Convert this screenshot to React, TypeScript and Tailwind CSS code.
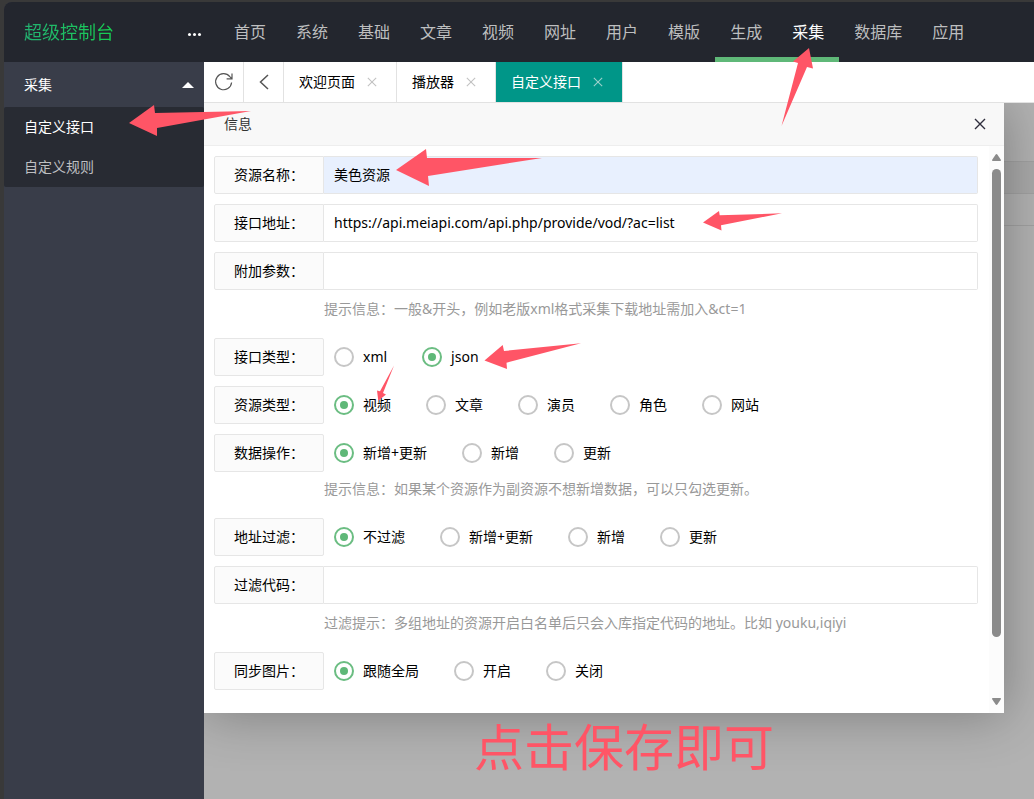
import { useState } from "react";
import type { ReactNode } from "react";

const NAV = ["首页", "系统", "基础", "文章", "视频", "网址", "用户", "模版", "生成", "采集", "数据库", "应用"];
const UNDERLINED = ["生成", "采集"];
const TABS = ["欢迎页面", "播放器", "自定义接口"];
const MENU = ["自定义接口", "自定义规则"];

// tip, barb, neck, tail, neck, barb
const ARROWS = [
  "129,123 154,105 155,113 251,111 157,128 157,136",
  "396,170 426,149 427,158 542,158 428,176 429,186",
  "809,48 813,68.5 807,67 781.5,126 798,63 793,61.5",
  "703,222.5 719,211 719.7,215.3 782,213.3 721,225.3 721.5,230.5",
  "484.5,360.5 502.7,345 504,351 581,343.3 506.5,362.7 507,369",
  "378.3,400.7 377,390.5 380,391.3 394,365.5 383,393 386,394.5",
];

function Cross({ className }: { className: string }) {
  return (
    <svg viewBox="0 0 12 12" className={className} fill="none" stroke="currentColor" aria-hidden="true">
      <path d="M1 1 L11 11 M11 1 L1 11" />
    </svg>
  );
}

function TextRow({ id, label, value = "", filled }: { id: string; label: string; value?: string; filled?: boolean }) {
  const [text, setText] = useState(value);
  return (
    <div className="flex h-[38px]">
      <label
        htmlFor={id}
        className="w-[110px] shrink-0 rounded-l-xs border border-[#e6e6e6] bg-[#fbfbfb] px-[19px] leading-9 whitespace-nowrap"
      >
        {label}
      </label>
      <input
        id={id}
        value={text}
        onChange={(e) => setText(e.target.value)}
        className={`min-w-0 flex-1 rounded-r-xs border border-l-0 border-[#e6e6e6] px-2.5 outline-none ${
          filled ? "bg-[#e8f0fe]" : "bg-white"
        }`}
      />
    </div>
  );
}

function RadioRow({ name, label, options, initial = 0 }: { name: string; label: string; options: string[]; initial?: number }) {
  const [picked, setPicked] = useState(initial);
  return (
    <fieldset className="flex h-[38px]" aria-label={label}>
      <div className="w-[110px] shrink-0 rounded-xs border border-[#e6e6e6] bg-[#fbfbfb] px-[19px] leading-9 whitespace-nowrap">
        {label}
      </div>
      <div className="flex items-center gap-[35px] pl-2.5">
        {options.map((o, i) => (
          <label key={o} className="flex items-center gap-[9px] whitespace-nowrap">
            <input
              type="radio"
              name={name}
              checked={picked === i}
              onChange={() => setPicked(i)}
              className="grid size-5 appearance-none place-items-center rounded-full border-2 border-[#c6c6c6] bg-white before:size-2 before:rounded-full checked:border-[#6bbd82] checked:before:bg-[#5fb878]"
            />
            <span>{o}</span>
          </label>
        ))}
      </div>
    </fieldset>
  );
}

function Hint({ children, tight }: { children: ReactNode; tight?: boolean }) {
  return (
    <p className={`pl-[110px] text-[#999] ${tight ? "h-[26px] leading-[14px]" : "h-7 leading-[18px]"}`}>{children}</p>
  );
}

function Dialog() {
  return (
    <section
      role="dialog"
      aria-label="信息"
      className="absolute top-0 right-[30px] left-0 bg-white shadow-[1px_1px_50px_rgba(0,0,0,0.3)]"
    >
      <header className="flex h-[43px] items-center justify-between border-b border-[#eee] bg-[#f8f8f8] pr-[18px] pl-5 text-[#333]">
        <h2>信息</h2>
        <button aria-label="关闭" className="text-[#2e2d3c]">
          <Cross className="size-3 [stroke-width:1.4]" />
        </button>
      </header>
      <div className="flex">
        <form className="flex min-w-0 flex-1 flex-col gap-2.5 pt-2.5 pr-[11px] pb-[23px] pl-2.5 text-black">
          <TextRow id="name" label="资源名称：" value="美色资源" filled />
          <TextRow id="url" label="接口地址：" value="https://api.meiapi.com/api.php/provide/vod/?ac=list" />
          <TextRow id="param" label="附加参数：" />
          <Hint>提示信息：一般&amp;开头，例如老版xml格式采集下载地址需加入&amp;ct=1</Hint>
          <RadioRow name="type" label="接口类型：" options={["xml", "json"]} initial={1} />
          <RadioRow name="mid" label="资源类型：" options={["视频", "文章", "演员", "角色", "网站"]} />
          <RadioRow name="opt" label="数据操作：" options={["新增+更新", "新增", "更新"]} />
          <Hint tight>提示信息：如果某个资源作为副资源不想新增数据，可以只勾选更新。</Hint>
          <RadioRow name="filter" label="地址过滤：" options={["不过滤", "新增+更新", "新增", "更新"]} />
          <TextRow id="code" label="过滤代码：" />
          <Hint>过滤提示：多组地址的资源开启白名单后只会入库指定代码的地址。比如 youku,iqiyi</Hint>
          <RadioRow name="pic" label="同步图片：" options={["跟随全局", "开启", "关闭"]} />
        </form>
        <div className="flex w-[15px] flex-col items-center bg-[#fcfcfc] py-2 text-[#8b8b8b]" aria-hidden="true">
          <svg viewBox="0 0 9 7" className="h-[7px] w-[9px]" fill="currentColor">
            <path d="M4.5 0 Q5 0 5.5 .7 L9 6 Q9 7 8.3 7 H.7 Q0 7 0 6 L3.5 .7 Q4 0 4.5 0Z" />
          </svg>
          <div className="mt-2 mb-[61px] w-[9px] flex-1 rounded-full bg-[#8b8b8b]" />
          <svg viewBox="0 0 9 7" className="h-[7px] w-[9px] rotate-180" fill="currentColor">
            <path d="M4.5 0 Q5 0 5.5 .7 L9 6 Q9 7 8.3 7 H.7 Q0 7 0 6 L3.5 .7 Q4 0 4.5 0Z" />
          </svg>
        </div>
      </div>
    </section>
  );
}

export default function App() {
  return (
    <div
      lang="zh-CN"
      className="relative flex min-h-screen overflow-hidden bg-[#393939] pt-0.5 pl-1 font-['Noto_Sans','Noto_Sans_CJK_SC',sans-serif] text-sm"
    >
      <div className="flex min-w-0 flex-1 flex-col overflow-hidden rounded-tl-lg bg-[#393d49]">
        <header className="flex h-[60px] shrink-0 bg-[#23262e]">
          <div className="flex w-[200px] shrink-0 items-center justify-between pr-[3px] pl-5">
            <a href="#" className="bg-linear-to-r from-[#23b070] to-[#16d050] bg-clip-text text-lg text-transparent">
              超级控制台
            </a>
            <button aria-label="更多" className="flex gap-0.5 pt-1">
              <i className="size-[3px] rounded-full bg-white" />
              <i className="size-[3px] rounded-full bg-white" />
              <i className="size-[3px] rounded-full bg-white" />
            </button>
          </div>
          <nav className="flex pl-[15px] text-base leading-[60px] whitespace-nowrap">
            {NAV.map((n) => (
              <a
                key={n}
                href="#"
                className={`relative px-[15px] ${n === "采集" ? "text-white" : "text-[#bdbebf]"}`}
              >
                {n}
                {UNDERLINED.includes(n) && <i className="absolute inset-x-0 bottom-0 h-[5px] bg-[#5fb878]" />}
              </a>
            ))}
          </nav>
        </header>

        <div className="flex flex-1">
          <aside className="w-[200px] shrink-0">
            <a href="#" className="flex h-[45px] items-center justify-between pr-2.5 pl-5 text-white">
              采集
              <svg viewBox="0 0 12 6" className="h-1.5 w-3" fill="currentColor" aria-hidden="true">
                <path d="M6 0 L12 6 H0Z" />
              </svg>
            </a>
            <ul className="rounded-xs bg-[#282b33] leading-10">
              {MENU.map((m, i) => (
                <li key={m}>
                  <a href="#" className={`block pl-5 ${i === 0 ? "text-white" : "text-[#bebfc1]"}`}>
                    {m}
                  </a>
                </li>
              ))}
            </ul>
          </aside>

          <main className="flex min-w-0 flex-1 flex-col bg-[#b2b2b2]">
            <div className="flex h-[41px] border-b border-[#e2e2e2] bg-white">
              <button aria-label="刷新" className="grid w-10 place-items-center border-r border-[#e2e2e2] text-[#555]">
                <svg viewBox="0 0 20 20" className="size-5" fill="none" stroke="currentColor" strokeWidth="1.2" aria-hidden="true">
                  <path d="M17.6 10.5 A8 8 0 1 1 15.8 4.6 L17.6 6.4 M18 1.4 V6.8 H12.6" />
                </svg>
              </button>
              <button aria-label="后退" className="grid w-10 place-items-center border-r border-[#e2e2e2] text-[#555]">
                <svg viewBox="0 0 10 16" className="h-4 w-2.5" fill="none" stroke="currentColor" strokeWidth="1.5" aria-hidden="true">
                  <path d="M9 1 L1.5 8 L9 15" />
                </svg>
              </button>
              {TABS.map((t, i) => (
                <div
                  key={t}
                  className={`flex items-center gap-3 border-r border-[#e2e2e2] pr-[19px] pl-[15px] whitespace-nowrap ${
                    i === 2 ? "bg-[#009688] text-white" : "text-black"
                  }`}
                >
                  <a href="#">{t}</a>
                  <button aria-label={`关闭${t}`} className={i === 2 ? "text-[#9bd0cb]" : "text-[#c2c2c2]"}>
                    <Cross className="size-2.5 [stroke-width:1.3]" />
                  </button>
                </div>
              ))}
            </div>

            <div className="relative flex-1 overflow-hidden">
              <div className="h-[59px] border-b border-[#a1a1a1]" />
              <div className="h-8 border-b border-[#a1a1a1] bg-[#a9a9a9]" />
              <div className="h-8 border-b border-[#a1a1a1]" />
              <Dialog />
              <p className="absolute top-[608px] left-[270px] text-[50px] leading-[72px] whitespace-nowrap text-[#ff5566]">
                点击保存即可
              </p>
            </div>
          </main>
        </div>
      </div>

      <svg className="pointer-events-none absolute top-0 left-0 h-[799px] w-[1034px]" fill="#ff5566" aria-hidden="true">
        {ARROWS.map((points) => (
          <polygon key={points} points={points} />
        ))}
      </svg>
    </div>
  );
}
